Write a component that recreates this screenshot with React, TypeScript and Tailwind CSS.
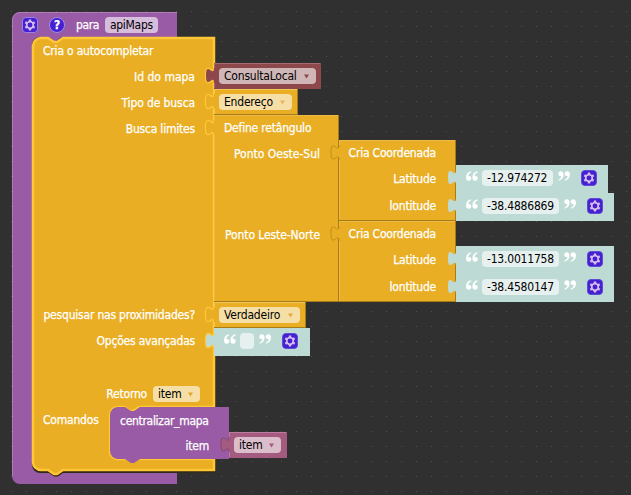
import type { ReactNode } from "react";

const DOWN_TAB = "v5c0,10 -8,-8 -8,7.5s8,-2.5 8,7.5";

/** Outline of a value block with its plug on the left side. */
function valuePath(w: number, h: number) {
  return `M0,0H${w}V${h}H0V20c0,-10 -8,8 -8,-7.5s8,2.5 8,-7.5z`;
}

type BlockProps = {
  x: number;
  y: number;
  w: number;
  h: number;
  fill: string;
  light?: string;
  dark?: string;
  tab?: string;
  path?: string;
  children?: ReactNode;
};

function Block({ x, y, w, h, fill, light, dark, tab, path, children }: BlockProps) {
  return (
    <div className="absolute" style={{ left: x, top: y, width: w, height: h }}>
      <svg className="absolute left-0 top-0 overflow-visible" width={w} height={h}>
        {dark && <path d={`M0,0H${w}V${h}H0z`} fill={dark} />}
        <path d={path ?? valuePath(w - (dark ? 1 : 0), h - (dark ? 1 : 0))} fill={fill} />
        {tab && <path d="M0,20c0,-10 -8,8 -8,-7.5s8,2.5 8,-7.5" fill="none" stroke={tab} strokeWidth="0.9" />}
        {light && <path d={`M0.5,${h - 1}V20M0.5,5V0.5H${w - 1}`} fill="none" stroke={light} />}
      </svg>
      <div className="relative h-full">{children}</div>
    </div>
  );
}

function Field({ className, children, arrow }: { className: string; children?: ReactNode; arrow?: string }) {
  return (
    <span
      className={`flex h-4 shrink-0 items-center rounded-[4px] pl-[5px] text-black [-webkit-text-stroke:0px] ${className}`}
    >
      {children}
      {arrow && (
        <svg className="ml-auto mr-[7px]" width="5" height="5" viewBox="0 0 5 5">
          <path d="M0,0.5H5L2.5,4.5z" fill={arrow} />
        </svg>
      )}
    </span>
  );
}

function Gear({ border = "#5a45d8" }: { border?: string }) {
  return (
    <svg className="shrink-0" width="16" height="16" viewBox="0 0 16 16">
      <rect x="0.5" y="0.5" width="15" height="15" rx="3.5" fill="#4420d0" stroke={border} strokeWidth="0.9" />
      <circle cx="8" cy="8" r="3.3" fill="none" stroke="#d5bdec" strokeWidth="1.7" />
      <path
        d="M8,2.6V4.4M8,11.6V13.4M3.3,5.3L4.9,6.2M11.1,9.8L12.7,10.7M3.3,10.7L4.9,9.8M11.1,6.2L12.7,5.3"
        stroke="#d5bdec"
        strokeWidth="2.4"
      />
    </svg>
  );
}

function Quote({ close }: { close?: boolean }) {
  return (
    <svg className="mb-1 shrink-0" width="12" height="10" viewBox="0 0 12 10">
      <g transform={close ? "rotate(180 6 5)" : undefined} fill="#fff">
        <path d="M5,0.3C1.8,1 0,3.2 0,6.4C0,8.4 1,9.7 2.8,9.7C4.3,9.7 5.3,8.7 5.3,7.3C5.3,5.9 4.3,5 3,5C2.8,5 2.5,5 2.3,5.1C2.5,3.3 3.5,2 5.3,1.3z" />
        <path d="M11.4,0.3C8.2,1 6.4,3.2 6.4,6.4C6.4,8.4 7.4,9.7 9.2,9.7C10.7,9.7 11.7,8.7 11.7,7.3C11.7,5.9 10.7,5 9.4,5C9.2,5 8.9,5 8.7,5.1C8.9,3.3 9.9,2 11.7,1.3z" />
      </g>
    </svg>
  );
}

function TextBlock({ x, y, w, value, box }: { x: number; y: number; w: number; value: string; box: string }) {
  return (
    <Block x={x} y={y} w={w} h={28} fill="#bddbd4">
      <div className="flex h-[26px] items-center pl-[10px]">
        <Quote />
        <Field className={`ml-1 bg-[#e6f1ef] ${box}`}>{value}</Field>
        <span className="ml-[5px] flex">
          <Quote close />
        </span>
        <span className="ml-[11px] flex">
          <Gear />
        </span>
      </div>
    </Block>
  );
}

function Coordinate({ y, h }: { y: number; h: number }) {
  return (
    <Block x={339} y={y} w={117} h={h} fill="#e9ae23" light="#edbb45" dark="#a77c18" tab="#b98a1c">
      <div className="flex flex-col pr-[20px]">
        <span className="flex h-[26px] items-center justify-end">Cria Coordenada</span>
        <span className="flex h-[25px] items-center justify-end">Latitude</span>
        <span className="flex h-[30px] items-center justify-end">lontitude</span>
      </div>
    </Block>
  );
}

const notch = "l6,4 3,0 6,-4";
const notchBack = "l-6,4 -3,0 -6,-4";

const procedurePath =
  `M0,8A8,8 0 0 1 8,0H165V25H50${notchBack}H28A8,8 0 0 0 20,33V453A8,8 0 0 0 28,461H165V472H8A8,8 0 0 1 0,464z`;

const autocompletePath =
  `M0,8A8,8 0 0 1 8,0H15${notch}H181V25${DOWN_TAB}V51${DOWN_TAB}V77${DOWN_TAB}V264${DOWN_TAB}V290${DOWN_TAB}` +
  `V369H106${notchBack}H85A8,8 0 0 0 77,377V413A8,8 0 0 0 85,421H181V432H30${notchBack}H8A8,8 0 0 1 0,424z`;

const commandPath = `M0,8A8,8 0 0 1 8,0H15${notch}H119V26V52H30${notchBack}H8A8,8 0 0 1 0,44z`;

export default function App() {
  return (
    <main className="relative h-[495px] w-[631px] overflow-hidden bg-[#303030] font-['DejaVu_Sans_Condensed','DejaVu_Sans',sans-serif] text-[12px] leading-4 tracking-[-0.2px] whitespace-nowrap text-white [font-stretch:condensed] [-webkit-text-stroke:0.25px]">
      <svg className="absolute inset-0" width="631" height="495">
        <defs>
          <pattern id="grid" width="15" height="15" x="11" y="11" patternUnits="userSpaceOnUse">
            <rect width="1" height="1" fill="#505050" />
          </pattern>
        </defs>
        <rect width="631" height="495" fill="url(#grid)" />
      </svg>

      <Block x={12} y={12} w={165} h={472} fill="#995ba5" path={procedurePath}>
        <svg className="absolute left-0 top-0 overflow-visible" width="165" height="472">
          <path d="M0.5,464V8A7.5,7.5 0 0 1 8,0.5H165" fill="none" stroke="#b07cb8" />
        </svg>
        <div className="relative flex h-[26px] items-center pl-[10px]">
          <Gear border="#9c8cf0" />
          <span className="ml-[11px] flex size-4 items-center justify-center rounded-full border border-[#9c8cf0] bg-[#4420d0] text-[12px] font-bold">
            ?
          </span>
          <span className="ml-[11px] w-[29px] tracking-[-0.4px]">para</span>
          <Field className="w-[53px] bg-[#d6bddb] tracking-[-0.3px]">apiMaps</Field>
        </div>
      </Block>

      <Block x={33} y={38} w={181} h={434} fill="#e9ae23" path={autocompletePath}>
        <svg className="absolute left-0 top-0 overflow-visible" width="181" height="434">
          <path d={autocompletePath} transform="translate(0.5,1.5)" fill="none" stroke="#30250c" strokeWidth="2" />
          <path d={autocompletePath} fill="#e9ae23" stroke="#ffc738" strokeWidth="2.5" />
        </svg>
        <div className="relative flex flex-col pr-[19px]">
          <span className="flex h-[26px] items-center pl-[10px]">Cria o autocompletar</span>
          <span className="flex h-[26px] items-center justify-end tracking-[0px]">Id do mapa</span>
          <span className="flex h-[26px] items-center justify-end tracking-[-0.1px]">Tipo de busca</span>
          <span className="flex h-[26px] items-center justify-end">Busca limites</span>
          <span className="mt-[160px] flex h-[26px] items-center justify-end">pesquisar nas proximidades?</span>
          <span className="flex h-[26px] items-center justify-end tracking-[-0.2px]">Opções avançadas</span>
          <span className="-mr-[5px] mt-[27px] flex h-[26px] items-center justify-end gap-[6px]">
            Retorno
            <Field className="w-[47px] bg-[#f6dfa7]" arrow="#e0a42c">
              item
            </Field>
          </span>
          <span className="flex h-[25px] items-center pl-[10px]">Comandos</span>
        </div>
      </Block>

      <Block x={214} y={63} w={107} h={26} fill="#8d484b" light="#a66b6e">
        <div className="flex h-[26px] items-center pl-[5px]">
          <Field className="w-[97px] bg-[#d1b6b7]" arrow="#8d484b">
            ConsultaLocal
          </Field>
        </div>
      </Block>

      <Block x={214} y={89} w={84} h={26} fill="#e9ae23" light="#f3c658" dark="#a77c18">
        <div className="flex h-[26px] items-center pl-[5px]">
          <Field className="w-[73px] bg-[#f6dfa7]" arrow="#e9b660">
            Endereço
          </Field>
        </div>
      </Block>

      <Block x={214} y={115} w={125} h={187} fill="#e9ae23" light="#edbb45" dark="#a77c18">
        <div className="flex flex-col pr-[19px]">
          <span className="flex h-[26px] items-center pl-[10px] tracking-[-0.2px]">Define retângulo</span>
          <span className="flex h-[25px] items-center justify-end tracking-[0px]">Ponto Oeste-Sul</span>
          <span className="mt-[56px] flex h-[25px] items-center justify-end tracking-[-0.1px]">Ponto Leste-Norte</span>
        </div>
      </Block>

      <Coordinate y={140} h={81} />
      <Coordinate y={221} h={81} />

      <TextBlock x={456} y={165} w={152} value="-12.974272" box="w-[71px]" />
      <TextBlock x={456} y={193} w={158} value="-38.4886869" box="w-[77px]" />
      <TextBlock x={456} y={246} w={158} value="-13.0011758" box="w-[77px]" />
      <TextBlock x={456} y={274} w={158} value="-38.4580147" box="w-[77px]" />

      <Block x={214} y={302} w={92} h={26} fill="#e9ae23" light="#f3c658" dark="#a77c18">
        <div className="flex h-[26px] items-center pl-[5px]">
          <Field className="w-[81px] bg-[#f6dfa7]" arrow="#e9a640">
            Verdadeiro
          </Field>
        </div>
      </Block>
      <TextBlock x={214} y={328} w={96} value="" box="w-[14px]" />

      <Block x={110} y={407} w={119} h={52} fill="#995ba5" path={commandPath}>
        <div className="flex flex-col pr-[20px]">
          <span className="flex h-[27px] items-center pl-[10px] tracking-[-0.3px]">centralizar_mapa</span>
          <span className="flex h-[24px] items-center justify-end">item</span>
        </div>
      </Block>

      <Block x={229} y={432} w={58} h={26} fill="#a55b80" light="#bc7c9d" tab="#804666">
        <div className="flex h-[26px] items-center pl-[5px]">
          <Field className="w-[47px] bg-[#dbbdcc]" arrow="#a55b80">
            item
          </Field>
        </div>
      </Block>
    </main>
  );
}
